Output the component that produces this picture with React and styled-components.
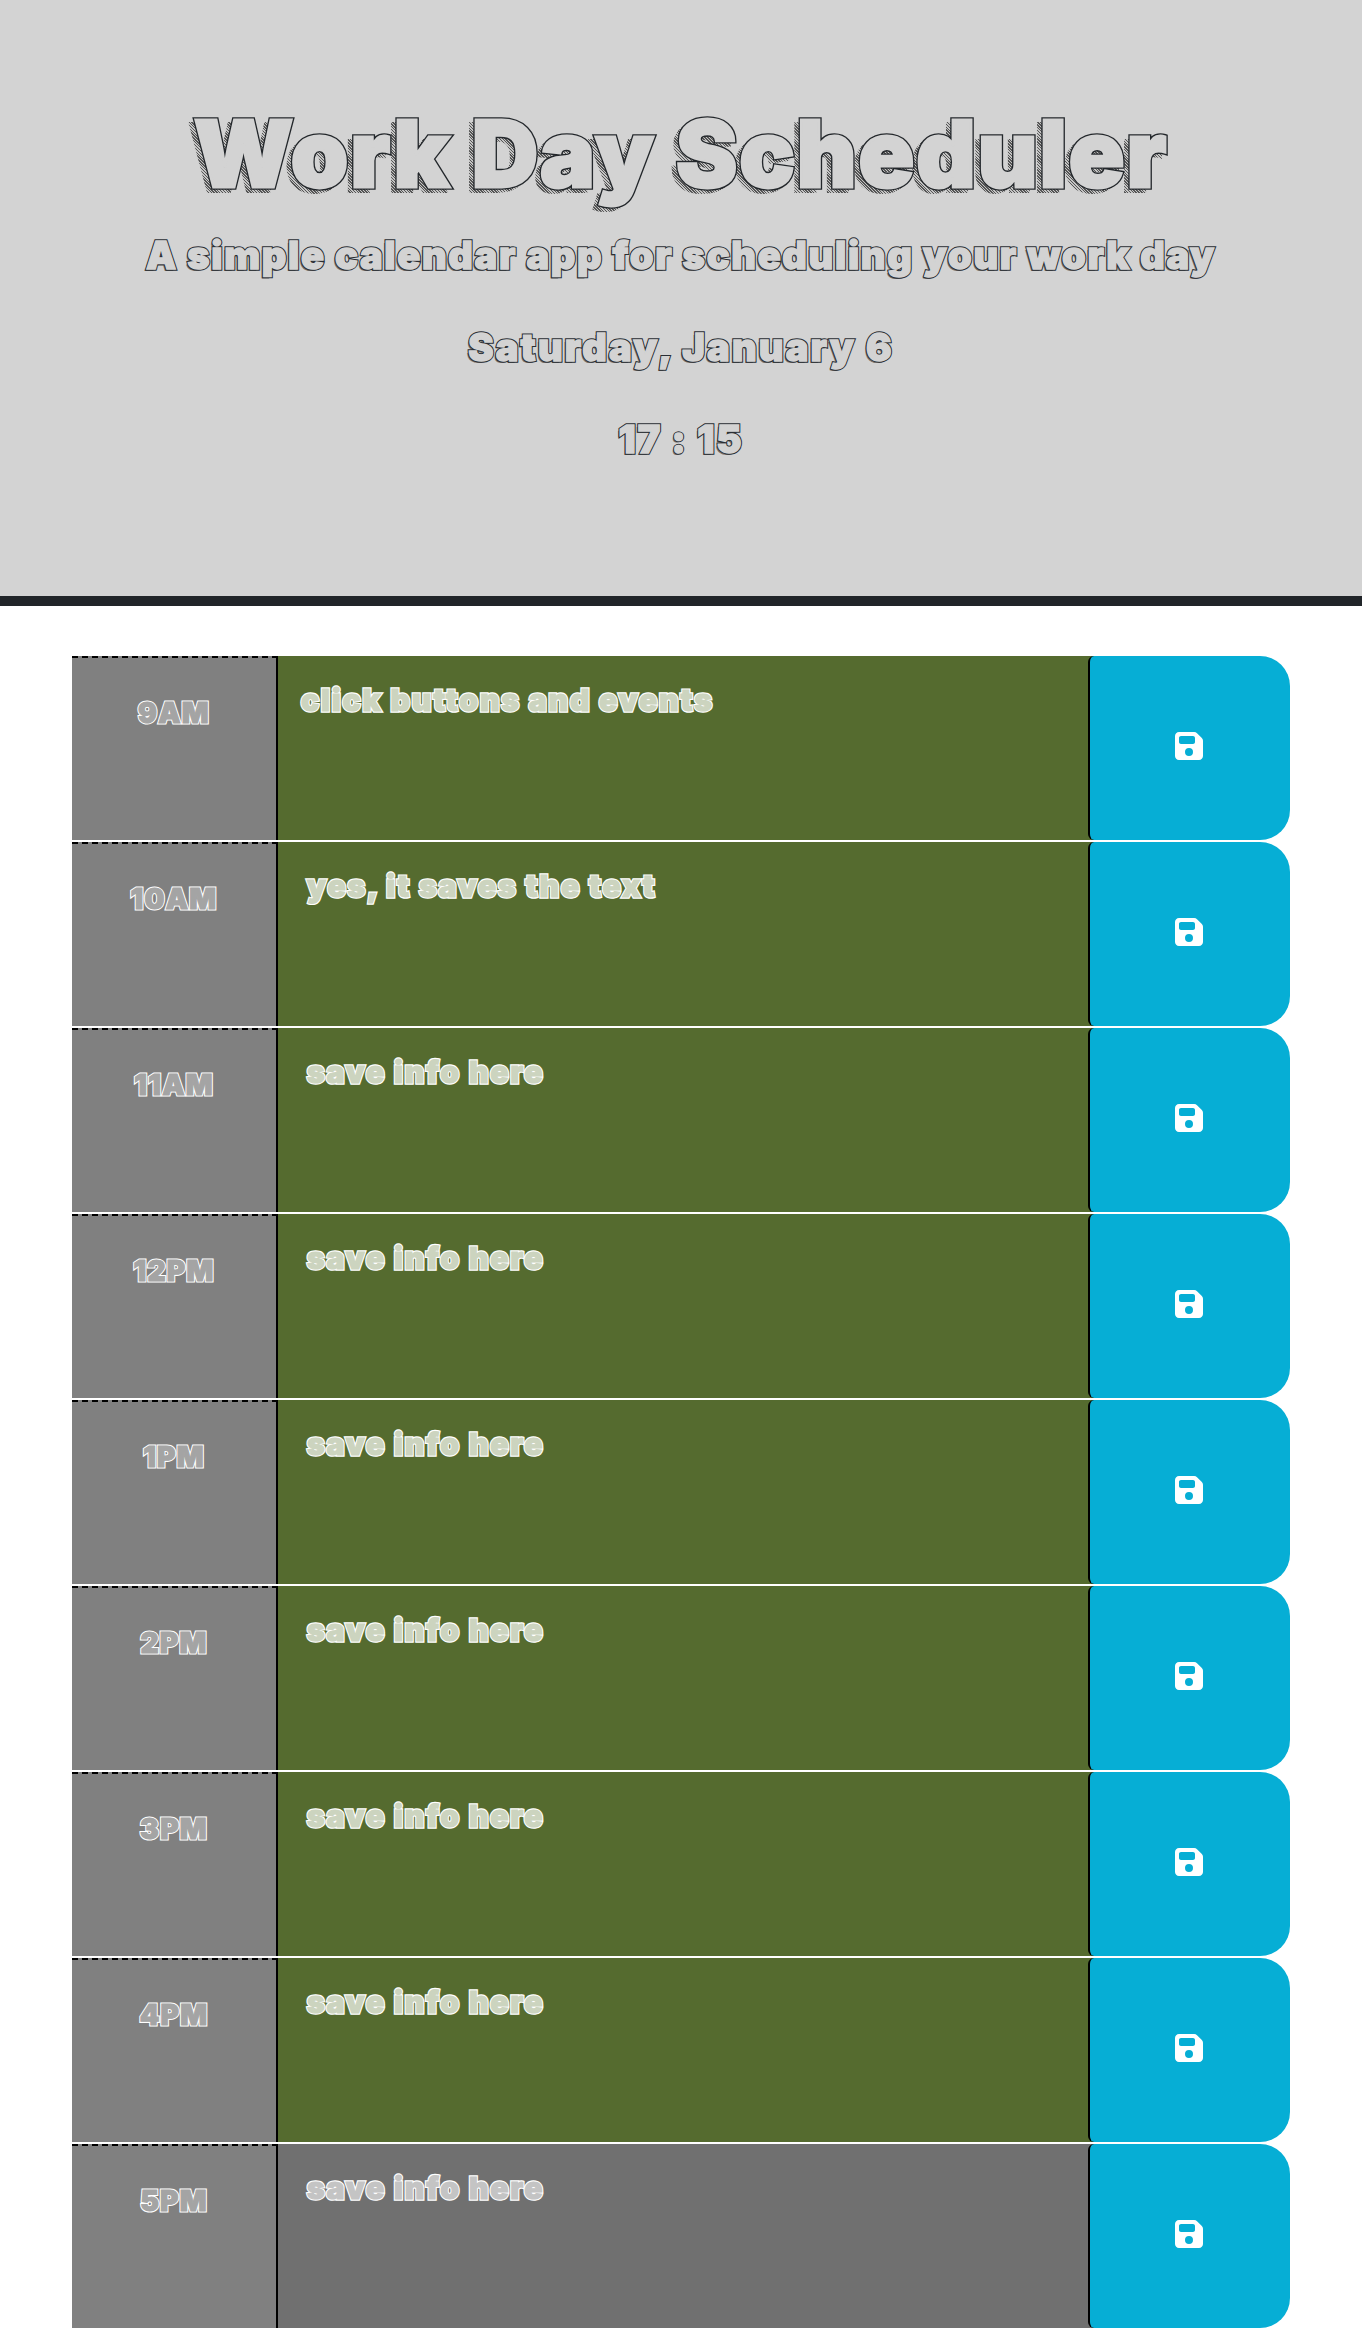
import React from 'react';
import styled, { createGlobalStyle } from 'styled-components';
import { FaFloppyDisk } from 'react-icons/fa6';

const GlobalStyle = createGlobalStyle`
    * {
        box-sizing: border-box;
    }

    body {
        margin: 0;
        background: #fff;
        font-family: "Inter", "Liberation Sans", sans-serif;
        line-height: 1.5;
    }
`;

// heavy outlined lettering: a wide stroke below, a narrower one in the fill colour on top
const Ink = styled.span`
    position: relative;
    display: inline-block;
    isolation: isolate;
    font-weight: 900;
    white-space: nowrap;
    letter-spacing: ${props => props.$spacing}px;
    color: ${props => props.$ink};
    -webkit-text-stroke: ${props => props.$outer}px ${props => props.$ink};
    text-shadow: ${props => props.$shadow || 'none'};

    &::after {
        content: attr(data-text);
        position: absolute;
        left: 0;
        top: 0;
        color: ${props => props.$fill};
        -webkit-text-stroke: ${props => props.$inner}px ${props => props.$fill};
        text-shadow: none;
    }
`;

const TitleInk = styled(Ink)`
    &::before {
        content: attr(data-text);
        position: absolute;
        left: -9px;
        top: 4px;
        z-index: -1;
        padding: 0 4px;
        color: transparent;
        -webkit-text-stroke: 4px transparent;
        background: repeating-linear-gradient(45deg, #555 0 1px, #c4c4c4 1px 2px);
        -webkit-background-clip: text;
        background-clip: text;
    }
`;

const Header = styled.header`
    display: flex;
    flex-direction: column;
    align-items: center;
    height: 606px;
    padding-top: 96px;
    background: #d3d3d3;
    border-bottom: 10px solid #212529;
    text-align: center;
`;

const Title = styled.h1`
    margin: 0 0 14px;
    height: 115px;
    font-size: 92px;
    font-weight: 900;
    line-height: 115px;
`;

const Lead = styled.p`
    margin: 0 0 32px;
    height: 60px;
    font-size: 38px;
    line-height: 60px;
`;

const Schedule = styled.main`
    width: 1218px;
    margin: 50px auto 0 72px;
`;

const Row = styled.div`
    display: grid;
    grid-template-columns: 206px 1fr 194px;
    height: 186px;
    border-bottom: 2px solid #fff;
`;

const Hour = styled.div`
    padding-top: 37px;
    background: #808080;
    border-top: 2px dashed #000;
    border-right: 2px solid #000;
    font-size: 28px;
    text-align: center;
    line-height: 36px;
`;

const Note = styled.div`
    padding: 20px 0 0 ${props => props.$inset}px;
    background: ${props => props.$past ? '#707070' : '#556b2f'};
    font-size: 30px;
    line-height: 48px;
`;

const SaveButton = styled.button`
    display: flex;
    align-items: center;
    justify-content: center;
    width: 202px;
    margin-left: -8px;
    padding: 0 2px 4px 0;
    background: #06aed5;
    border: none;
    border-left: 2px solid #000;
    border-radius: 6px 30px 30px 6px;
    color: #fff;
    font-size: 32px;
`;

const hours = [
    { time: '9AM', text: 'click buttons and events', inset: 23 },
    { time: '10AM', text: 'yes, it saves the text', inset: 29 },
    { time: '11AM', text: 'save info here', inset: 29 },
    { time: '12PM', text: 'save info here', inset: 29 },
    { time: '1PM', text: 'save info here', inset: 29 },
    { time: '2PM', text: 'save info here', inset: 29 },
    { time: '3PM', text: 'save info here', inset: 29 },
    { time: '4PM', text: 'save info here', inset: 29 },
    { time: '5PM', text: 'save info here', inset: 29, past: true },
];

const LeadText = ({ children, spacing }) => (
    <Lead>
        <Ink
            data-text={children}
            $spacing={spacing}
            $ink='#2a2e33'
            $fill='#d3d3d3'
            $outer={3.4}
            $inner={1.4}
            $shadow='-2px 2px 0 #6f6f6f'
        >
            {children}
        </Ink>
    </Lead>
);

const App = () => {
    return (
        <>
            <GlobalStyle />
            <Header>
                <Title>
                    <TitleInk
                        data-text='Work Day Scheduler'
                        $spacing={2}
                        $ink='#23272b'
                        $fill='#d3d3d3'
                        $outer={5.5}
                        $inner={2.8}
                    >
                        Work Day Scheduler
                    </TitleInk>
                </Title>
                <LeadText spacing={1.7}>A simple calendar app for scheduling your work day</LeadText>
                <LeadText spacing={2.2}>Saturday, January 6</LeadText>
                <LeadText spacing={1.9}>17 : 15</LeadText>
            </Header>
            <Schedule>
                {hours.map(hour => (
                    <Row key={hour.time}>
                        <Hour>
                            <Ink data-text={hour.time} $spacing={1.3} $ink='#fff' $fill='#a4a4a4' $outer={3.2} $inner={1.1}>
                                {hour.time}
                            </Ink>
                        </Hour>
                        <Note $inset={hour.inset} $past={hour.past}>
                            <Ink
                                data-text={hour.text}
                                $spacing={1.9}
                                $ink='#fff'
                                $fill={hour.past ? '#c4c4c4' : '#ccd4bf'}
                                $outer={3.4}
                                $inner={1.1}
                            >
                                {hour.text}
                            </Ink>
                        </Note>
                        <SaveButton type='button' aria-label={`Save ${hour.time}`}>
                            <FaFloppyDisk />
                        </SaveButton>
                    </Row>
                ))}
            </Schedule>
        </>
    );
};

export default App;
